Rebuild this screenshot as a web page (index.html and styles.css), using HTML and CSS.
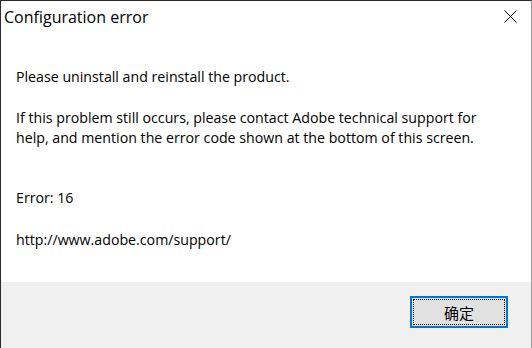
FILE: index.html
```html
<!DOCTYPE html>
<html>
	<head>
		<title>Configuration error</title>
		<meta charset="utf-8">
		<link rel="stylesheet" href="styles.css">
	</head>
	<body>
		<div class="window">
			<div class="titlebar">
				<div class="title">Configuration error</div>
				<div class="close">
					<svg width="13" height="13" viewBox="0 0 13 13"><path d="M0.5 0.5 L12.5 12.5 M12.5 0.5 L0.5 12.5" stroke="#000" stroke-width="1" fill="none"/></svg>
				</div>
			</div>
			<div class="content">
				<p class="first">Please uninstall and reinstall the product.</p>
				<p class="help">If this problem still occurs, please contact Adobe technical support for help, and mention the error code shown at the bottom of this screen.</p>
				<p class="code">Error: 16</p>
				<p>http://www.adobe.com/support/</p>
			</div>
			<div class="footer">
				<button class="ok">确定</button>
			</div>
		</div>
	</body>
</html>
```

FILE: styles.css
```css
body {margin:0;background:#fff;font-family:"Open Sans","Noto Sans CJK SC",sans-serif;color:#000;}
.window {width:532px;height:348px;box-sizing:border-box;border-left:1px solid #2b2b2b;border-top:1px solid #2b2b2b;border-right:1px solid #9a9a9a;display:flex;flex-direction:column;background:#fff;}
.titlebar {height:30px;display:flex;align-items:center;justify-content:space-between;}
.title {font-size:16px;padding:2px 0 0 3px;line-height:20px;}
.close {width:42px;height:30px;display:flex;align-items:center;justify-content:center;padding-top:1px;box-sizing:border-box;}
.close svg {display:block;}
.content {flex:1;padding:36px 0 0 15px;font-size:14.2px;line-height:20px;}
.content p {margin:0;}
.content .first {margin-bottom:21px;}
.content .help {width:480px;margin-bottom:40px;}
.content .code {margin-bottom:22px;}
.footer {height:66px;background:#f0f0f0;display:flex;justify-content:flex-end;align-items:flex-start;padding:14px 23px 0 0;box-sizing:border-box;}
.ok {width:98px;height:32px;background:#e1e1e1;border:2px solid #0078d7;font-family:"Noto Sans CJK SC",sans-serif;font-size:15px;color:#000;outline:1px dotted #000;outline-offset:-4px;padding:0;}
```
